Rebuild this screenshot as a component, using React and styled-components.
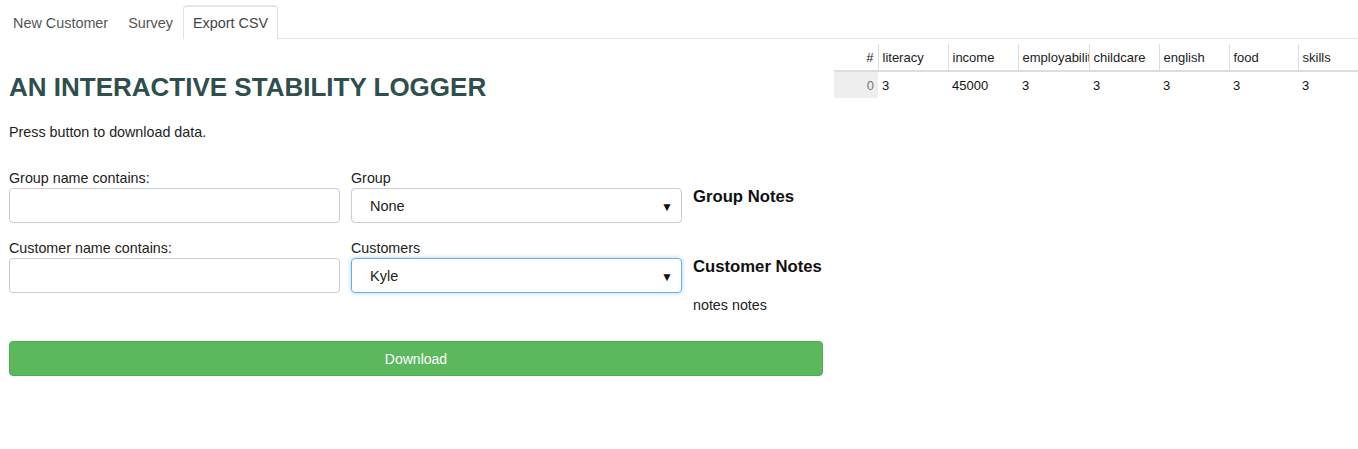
import React from "react";
import styled, { createGlobalStyle } from "styled-components";

const GlobalStyle = createGlobalStyle`
  body {
    margin: 0;
    background: #fff;
    font-family: "Liberation Sans", Arial, sans-serif;
    color: #222;
  }
`;

const Page = styled.div`
  padding: 5px 0 0 3px;
`;

// 상단 탭 바
const TabBar = styled.div`
  display: flex;
  height: 33px;
  border-bottom: 1px solid #e3e3e3;
`;

const Tab = styled.div`
  padding: 0 9px;
  display: flex;
  align-items: center;
  font-size: 14.4px;
  color: ${(p) => (p.active ? "#444" : "#555")};
  border: 1px solid ${(p) => (p.active ? "#e3e3e3" : "transparent")};
  border-bottom: none;
  border-radius: 4px 4px 0 0;
  background: #fff;
  margin-bottom: -1px;
  ${(p) => p.active && "border-top: 2px solid #e6e6e6;"}
`;

const Main = styled.div`
  display: grid;
  grid-template-columns: 831px 1fr;
`;

const Left = styled.div`
  padding: 0 11px 0 6px;
`;

const Title = styled.h1`
  margin: 32px 0 0;
  font-size: 26px;
  line-height: 32px;
  font-weight: bold;
  color: #2f4f4f;
`;

const Intro = styled.p`
  margin: 19px 0 0;
  font-size: 14.3px;
  line-height: 20px;
`;

const FormGrid = styled.div`
  display: grid;
  grid-template-columns: 331px 331px 1fr;
  column-gap: 11px;
  margin-top: 28px;
`;

const Field = styled.div`
  display: flex;
  flex-direction: column;
  margin-bottom: 17px;
`;

const Label = styled.label`
  font-size: 14.3px;
  line-height: 18px;
  margin-top: -1px;
  margin-bottom: 1px;
`;

const TextInput = styled.input`
  box-sizing: border-box;
  height: 35px;
  border: 1px solid #ccc;
  border-radius: 4px;
  padding: 0 10px;
  font: inherit;
  outline: none;
`;

const SelectBox = styled.div`
  box-sizing: border-box;
  height: 35px;
  border: 1px solid ${(p) => (p.focused ? "#66afe9" : "#ccc")};
  border-radius: 4px;
  display: flex;
  align-items: center;
  justify-content: space-between;
  padding: 0 8px 0 18px;
  font-size: 14.5px;
  box-shadow: ${(p) => (p.focused ? "0 0 4px rgba(102,175,233,0.6)" : "none")};
`;

const Caret = styled.span`
  font-size: 12px;
  color: #111;
  margin-top: 2px;
`;

const Notes = styled.div`
  padding-top: 17px;
`;

const NotesTitle = styled.h3`
  margin: 0;
  font-size: 16.7px;
  line-height: 20px;
  font-weight: bold;
  color: #111;
`;

const NotesText = styled.div`
  margin-top: 20px;
  font-size: 14.3px;
  line-height: 17px;
`;

const DownloadButton = styled.button`
  width: 100%;
  height: 35px;
  margin-top: 27px;
  border: 1px solid #4cae4c;
  border-radius: 4px;
  background: #5cb85c;
  color: #fff;
  font: inherit;
  font-size: 14px;
`;

// 오른쪽 데이터 테이블
const Table = styled.table`
  margin-top: 5px;
  border-collapse: collapse;
  font-size: 13px;
  table-layout: fixed;
  width: 524px;
`;

const Th = styled.th`
  height: 26px;
  padding: 0 4px;
  text-align: ${(p) => (p.right ? "right" : "left")};
  font-weight: normal;
  white-space: nowrap;
  overflow: hidden;
  border-bottom: 2px solid #ddd;
  border-left: ${(p) => (p.first ? "none" : "1px solid #ddd")};
`;

const Td = styled.td`
  height: 26px;
  padding: 0 4px;
  text-align: ${(p) => (p.index ? "right" : "left")};
  background: ${(p) => (p.index ? "#eee" : "transparent")};
  color: ${(p) => (p.index ? "#777" : "#111")};
`;

const columns = ["literacy", "income", "employability", "childcare", "english", "food", "skills"];
const row = ["3", "45000", "3", "3", "3", "3", "3"];
const widths = [44, 70, 70, 71, 70, 70, 69, 60];

export default function App() {
  return (
    <Page>
      <GlobalStyle />
      <TabBar>
        <Tab>New Customer</Tab>
        <Tab>Survey</Tab>
        <Tab active>Export CSV</Tab>
      </TabBar>
      <Main>
        <Left>
          <Title>AN INTERACTIVE STABILITY LOGGER</Title>
          <Intro>Press button to download data.</Intro>
          <FormGrid>
            <Field>
              <Label>Group name contains:</Label>
              <TextInput />
            </Field>
            <Field>
              <Label>Group</Label>
              <SelectBox>
                None<Caret>▼</Caret>
              </SelectBox>
            </Field>
            <Notes>
              <NotesTitle>Group Notes</NotesTitle>
            </Notes>
            <Field>
              <Label>Customer name contains:</Label>
              <TextInput />
            </Field>
            <Field>
              <Label>Customers</Label>
              <SelectBox focused>
                Kyle<Caret>▼</Caret>
              </SelectBox>
            </Field>
            <Notes>
              <NotesTitle>Customer Notes</NotesTitle>
              <NotesText>notes notes</NotesText>
            </Notes>
          </FormGrid>
          <DownloadButton>Download</DownloadButton>
        </Left>
        <div>
          <Table>
            <colgroup>
              {widths.map((w, i) => (
                <col key={i} style={{ width: w }} />
              ))}
            </colgroup>
            <thead>
              <tr>
                <Th right first>#</Th>
                {columns.map((c) => (
                  <Th key={c}>{c}</Th>
                ))}
              </tr>
            </thead>
            <tbody>
              <tr>
                <Td index>0</Td>
                {row.map((v, i) => (
                  <Td key={i}>{v}</Td>
                ))}
              </tr>
            </tbody>
          </Table>
        </div>
      </Main>
    </Page>
  );
}
